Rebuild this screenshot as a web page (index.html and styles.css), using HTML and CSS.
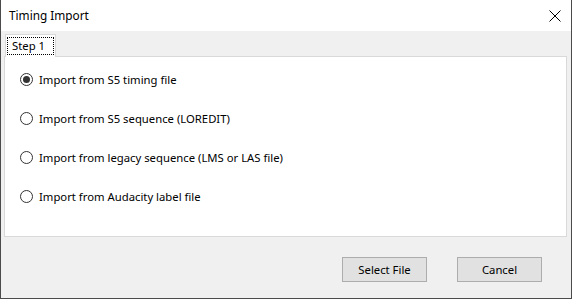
FILE: index.html
```html
<!DOCTYPE html>
<html>
<head>
<meta charset="utf-8">
<link rel="stylesheet" href="styles.css">
</head>
<body>
<div class="window">
  <div class="titlebar">
    <span class="title">Timing Import</span>
    <svg class="close" width="12" height="12" viewBox="0 0 12 12"><path d="M0.5 0.5L11.5 11.5M11.5 0.5L0.5 11.5" stroke="#000" stroke-width="1" fill="none"/></svg>
  </div>
  <div class="body">
    <div class="tabs">
      <div class="tab"><span class="focus">Step 1</span></div>
    </div>
    <div class="panel">
      <label class="row"><span class="radio checked"></span>Import from S5 timing file</label>
      <label class="row"><span class="radio"></span>Import from S5 sequence (LOREDIT)</label>
      <label class="row"><span class="radio"></span>Import from legacy sequence (LMS or LAS file)</label>
      <label class="row"><span class="radio"></span>Import from Audacity label file</label>
    </div>
    <div class="buttons">
      <button class="btn">Select File</button>
      <button class="btn">Cancel</button>
    </div>
  </div>
</div>
</body>
</html>
```
FILE: styles.css
```css
* { box-sizing: border-box; }
html, body { margin: 0; padding: 0; }
body {
  width: 572px;
  height: 299px;
  overflow: hidden;
  font-family: "Noto Sans", "Open Sans", sans-serif;
  font-size: 11.3px;
  color: #000;
  background: #fff;
}
.window {
  width: 572px;
  height: 299px;
  border-left: 1px solid #4b4b4b;
  border-right: 1px solid #4b4b4b;
  border-bottom: 1px solid #4b4b4b;
  display: flex;
  flex-direction: column;
}
.titlebar {
  height: 31px;
  background: #fff;
  display: flex;
  align-items: center;
  padding-left: 8px;
  padding-right: 9px;
}
.title {
  flex: 1;
  font-size: 11.8px;
  position: relative;
  top: -1px;
}
.close { display: block; margin-right: 1px; }
.body {
  flex: 1;
  background: #f0f0f0;
  display: flex;
  flex-direction: column;
  padding: 3px 4px 0 3px;
}
.tabs {
  display: flex;
  padding-left: 1px;
  height: 22px;
  position: relative;
  z-index: 1;
}
.tab {
  width: 51px;
  height: 23px;
  background: #fff;
  border: 1px solid #d9d9d9;
  border-bottom: none;
  padding: 2px 1px 0 1px;
}
.focus {
  display: block;
  border: 1px dotted #000;
  height: 18px;
  line-height: 15px;
  padding-left: 4px;
}
.panel {
  height: 181px;
  background: #fff;
  border: 1px solid #d9d9d9;
  display: flex;
  flex-direction: column;
  padding: 14px 0 0 15px;
  gap: 23px;
}
.row {
  display: flex;
  align-items: center;
  height: 16px;
  gap: 6px;
}
.radio {
  width: 13px;
  height: 13px;
  border: 1px solid #333;
  border-radius: 50%;
  background: #fff;
  display: flex;
  align-items: center;
  justify-content: center;
}
.radio.checked::after {
  content: "";
  width: 7px;
  height: 7px;
  border-radius: 50%;
  background: #333;
}
.buttons {
  display: flex;
  justify-content: flex-end;
  gap: 30px;
  padding: 20px 25px 0 0;
}
.btn {
  width: 85px;
  height: 25px;
  background: #e1e1e1;
  border: 1px solid #adadad;
  font-family: "Noto Sans", "Open Sans", sans-serif;
  font-size: 11.3px;
  color: #000;
  padding: 0;
  margin: 0;
}
```
